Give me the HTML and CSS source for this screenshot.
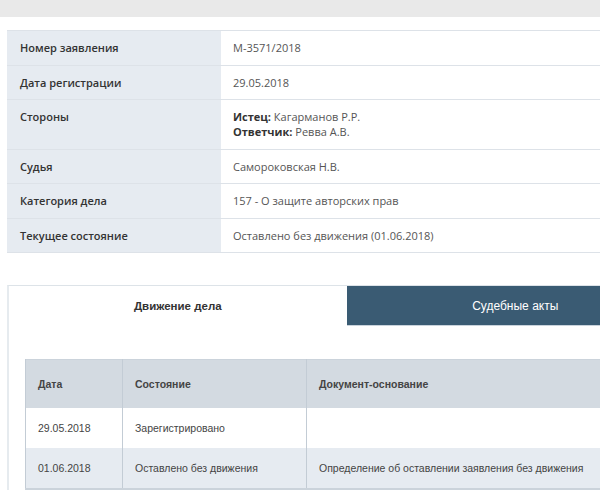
FILE: index.html
```html
<!DOCTYPE html>
<html lang="ru">
<head>
  <meta charset="UTF-8" />
  <title>Карточка дела</title>
  <link rel="stylesheet" href="styles.css">
</head>
<body>
  <div class="topbar"></div>

  <div class="wrapper">
    <table class="info">
      <tr><td class="label">Номер заявления</td><td class="value">М-3571/2018</td></tr>
      <tr><td class="label">Дата регистрации</td><td class="value">29.05.2018</td></tr>
      <tr>
        <td class="label">Стороны</td>
        <td class="value"><b>Истец:</b> Кагарманов Р.Р.<br><b>Ответчик:</b> Ревва А.В.</td>
      </tr>
      <tr><td class="label">Судья</td><td class="value">Самороковская Н.В.</td></tr>
      <tr><td class="label">Категория дела</td><td class="value">157 - О защите авторских прав</td></tr>
      <tr><td class="label">Текущее состояние</td><td class="value">Оставлено без движения (01.06.2018)</td></tr>
    </table>

    <div class="tabs-box">
      <div class="tabs">
        <div class="tab active">Движение дела</div>
        <div class="tab">Судебные акты</div>
      </div>

      <div class="tab-body">
        <table class="moves">
          <tr>
            <th class="col-date">Дата</th>
            <th class="col-state">Состояние</th>
            <th>Документ-основание</th>
          </tr>
          <tr>
            <td>29.05.2018</td>
            <td>Зарегистрировано</td>
            <td></td>
          </tr>
          <tr class="alt">
            <td>01.06.2018</td>
            <td>Оставлено без движения</td>
            <td>Определение об оставлении заявления без движения</td>
          </tr>
        </table>
      </div>
    </div>
  </div>
</body>
</html>
```

FILE: styles.css
```css
body {
  margin: 0;
  padding: 0;
  background: #ffffff;
  font-family: "Open Sans", Arial, sans-serif;
  overflow: hidden;
}

.topbar {
  height: 17px;
  background: #e9e9e9;
}

.wrapper {
  width: 677px;
  margin: 13px 0 0 7px;
}

.info {
  width: 100%;
  border-collapse: collapse;
  font-size: 11px;
  line-height: 15px;
  border-top: 1px solid #dde2e8;
}

.info td {
  padding: 9px 12px 9.5px;
  border-bottom: 1px solid #dde2e8;
  vertical-align: top;
}

.info .label {
  width: 189px;
  padding-left: 13px;
  background: #e6ebf1;
  color: #333;
  font-weight: 600;
}

.info .value {
  color: #555;
}

.info .value b {
  color: #333;
  font-weight: 700;
}

.tabs-box {
  margin-top: 32px;
  border-top: 1px solid #dde3e8;
  border-left: 2px solid #e6ebef;
  font-family: "Liberation Sans", Arial, sans-serif;
}

.tabs {
  display: flex;
}

.tab {
  flex: 1;
  height: 40px;
  display: flex;
  align-items: center;
  justify-content: center;
  font-size: 12px;
  background: #3a5b73;
  color: #ffffff;
  border-bottom: 1px solid #c9d3dc;
  box-sizing: border-box;
}

.tab.active {
  background: #ffffff;
  color: #333;
  font-size: 11.5px;
  font-weight: bold;
  border-bottom: none;
}

.tab-body {
  padding: 33px 16px 0 16px;
}

.moves {
  width: 100%;
  border-collapse: collapse;
  font-size: 10.5px;
  color: #444;
  border: 1px solid #cbd3db;
  border-bottom-width: 2px;
}

.moves th,
.moves td {
  text-align: left;
  padding: 0 12px;
  border-left: 1px solid #c3ccd5;
}

.moves th {
  height: 48px;
  background: #d3dae1;
  font-weight: bold;
  color: #444;
}

.moves td {
  height: 40px;
  background: #ffffff;
}

.moves .alt td {
  background: #e6ebf1;
}

.moves .col-date {
  width: 72px;
}

.moves .col-state {
  width: 159px;
}
```
